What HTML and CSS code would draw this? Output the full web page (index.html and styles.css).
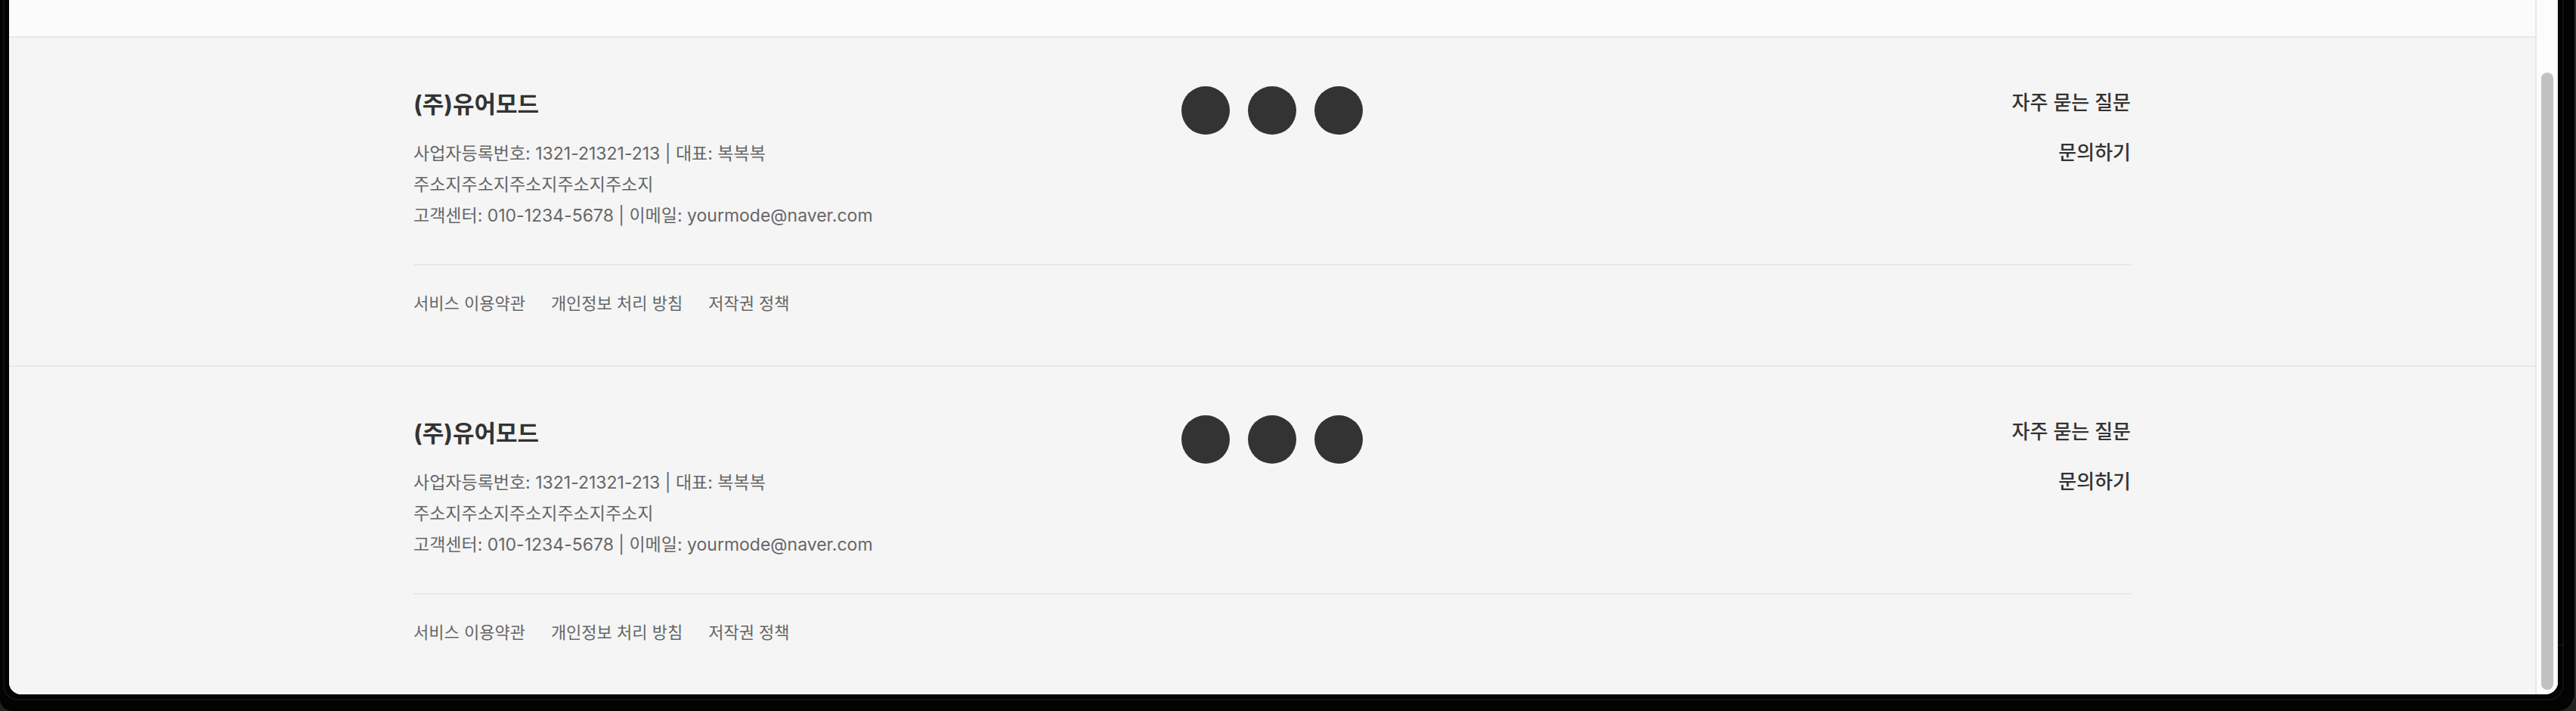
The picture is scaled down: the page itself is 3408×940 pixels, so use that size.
FILE: index.html
```html
<!DOCTYPE html>
<html lang="ko">
<head>
<meta charset="utf-8">
<title>유어모드</title>
<link rel="stylesheet" href="styles.css">
</head>
<body>
<div class="bezel">
  <div class="screen">
    <main class="page">
      <div class="content"></div>
      <footer class="footer">
        <div class="inner">
          <div class="top">
            <div class="company">
              <h2 class="name">(주)유어모드</h2>
              <p class="info">사업자등록번호: 1321-21321-213 | 대표: 복복복</p>
              <p class="info">주소지주소지주소지주소지주소지</p>
              <p class="info">고객센터: 010-1234-5678 | 이메일: yourmode@naver.com</p>
            </div>
            <div class="social"><span class="dot"></span><span class="dot"></span><span class="dot"></span></div>
            <nav class="support"><a href="#">자주 묻는 질문</a><a href="#">문의하기</a></nav>
          </div>
          <nav class="policies"><a href="#">서비스 이용약관</a><a href="#">개인정보 처리 방침</a><a href="#">저작권 정책</a></nav>
        </div>
      </footer>
      <footer class="footer">
        <div class="inner">
          <div class="top">
            <div class="company">
              <h2 class="name">(주)유어모드</h2>
              <p class="info">사업자등록번호: 1321-21321-213 | 대표: 복복복</p>
              <p class="info">주소지주소지주소지주소지주소지</p>
              <p class="info">고객센터: 010-1234-5678 | 이메일: yourmode@naver.com</p>
            </div>
            <div class="social"><span class="dot"></span><span class="dot"></span><span class="dot"></span></div>
            <nav class="support"><a href="#">자주 묻는 질문</a><a href="#">문의하기</a></nav>
          </div>
          <nav class="policies"><a href="#">서비스 이용약관</a><a href="#">개인정보 처리 방침</a><a href="#">저작권 정책</a></nav>
        </div>
      </footer>
    </main>
    <div class="scrollbar"><div class="thumb"></div></div>
  </div>
</div>
</body>
</html>
```
FILE: styles.css
```css
* { box-sizing: border-box; }

body {
  margin: 0;
  background: #222;
  color: #333;
  font-family: Inter, "Noto Sans CJK KR", sans-serif;
}

a { color: inherit; text-decoration: none; }

.bezel {
  position: relative;
  min-height: 100vh;
  padding: 0 22px 22px 12px;
  background: #030303;
  border-right: 2px solid #2b2b2b;
  border-bottom-right-radius: 24px;
  border-bottom-left-radius: 16px;
}

/* thin seam that runs round the screen */
.bezel::before {
  content: "";
  position: absolute;
  inset: -2px 14px 14px 4px;
  border: 2px solid #111;
  border-radius: 0 0 20px 20px;
}

/* antenna line on the right edge */
.bezel::after {
  content: "";
  position: absolute;
  right: 16px;
  bottom: 86px;
  width: 6px;
  height: 2px;
  background: #111;
}

.screen {
  position: relative;
  display: flex;
  overflow: hidden;
  border-radius: 0 0 16px 16px;
  background: #fcfcfc;
}

.page { flex: 1; }

.content { height: 48px; background: #fbfbfb; }

.footer {
  padding: 64px 0;
  border-top: 2px solid #e8e8e8;
  background: #f5f5f5;
}

.inner {
  max-width: 2400px;
  margin: 0 auto;
  padding: 0 64px;
}

.top {
  display: grid;
  grid-template-columns: 1fr auto 1fr;
  align-items: start;
  padding-bottom: 43px;
  border-bottom: 2px solid #e8e8e8;
}

.name {
  margin: 0 0 21px;
  font-size: 31px;
  line-height: 48px;
  font-weight: 700;
}

.info {
  margin: 0;
  color: #666;
  font-size: 23px;
  line-height: 41px;
}

.social { display: flex; gap: 24px; }

.dot {
  width: 64px;
  height: 64px;
  border-radius: 50%;
  background: #333;
}

.support {
  display: flex;
  flex-direction: column;
  align-items: flex-end;
  gap: 22px;
  font-size: 26px;
  line-height: 44px;
  font-weight: 500;
}

.policies {
  display: flex;
  gap: 34px;
  padding-top: 32px;
  color: #666;
  font-size: 22px;
  line-height: 36px;
}

.scrollbar {
  display: flex;
  width: 30px;
  padding: 96px 4px 6px 6px;
  border-left: 2px solid #e8e8e8;
  border-right: 2px solid #f2f2f2;
}

.thumb {
  flex: 1;
  border-radius: 8px;
  background: #c1c1c1;
}
```
